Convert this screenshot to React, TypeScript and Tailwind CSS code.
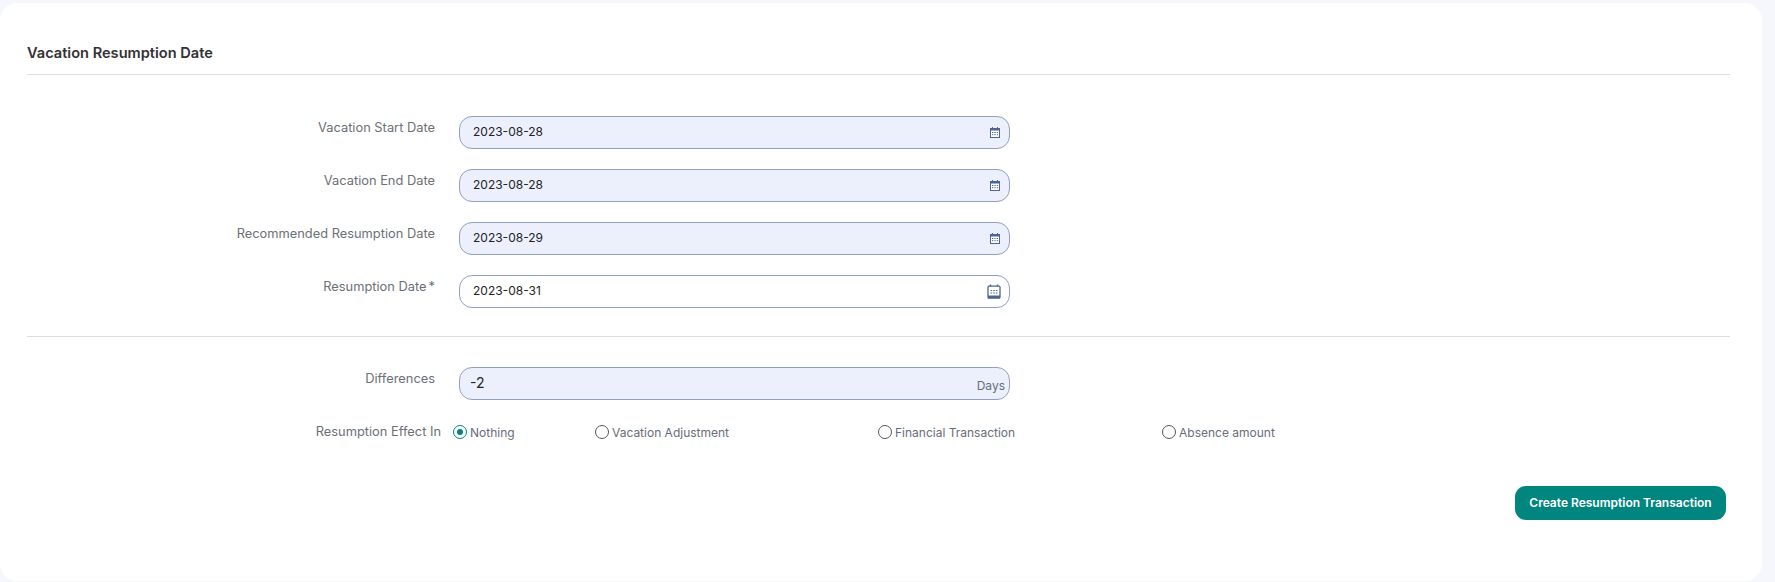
const dateFields = [
  { label: 'Vacation Start Date', value: '2023-08-28', disabled: true },
  { label: 'Vacation End Date', value: '2023-08-28', disabled: true },
  { label: 'Recommended Resumption Date', value: '2023-08-29', disabled: true },
  { label: 'Resumption Date', value: '2023-08-31', disabled: false, required: true },
];

function CalendarIcon({ large }: { large: boolean }) {
  if (large) {
    return (
      <svg width="14" height="15" viewBox="0 0 14 15" className="shrink-0">
        <path d="M3.5 0.5v3M10.5 0.5v3" stroke="#4f6591" strokeWidth="1.4" />
        <rect x="1" y="2.2" width="12" height="12" rx="1" fill="#fff" stroke="#4f6591" strokeWidth="1.3" />
        <rect x="1" y="11.5" width="12" height="2.8" fill="#4f6591" />
        <path d="M3.5 6.5h1.6M6.2 6.5h1.6M8.9 6.5h1.6M3.5 9h1.6M6.2 9h1.6M8.9 9h1.6" stroke="#4f6591" strokeWidth="1.2" />
      </svg>
    );
  }
  return (
    <svg width="10" height="11" viewBox="0 0 10 11" className="shrink-0">
      <path d="M2.5 0v2M7.5 0v2" stroke="#5a6ea0" strokeWidth="1" />
      <rect x="0.5" y="1.5" width="9" height="9" fill="#fff" stroke="#4f6591" />
      <rect x="0" y="1" width="10" height="2.5" fill="#4f6591" />
      <path d="M2 5.5h1.3M4.4 5.5h1.3M6.8 5.5h1.3M2 7.7h1.3M4.4 7.7h1.3M6.8 7.7h1.3" stroke="#4f6591" />
    </svg>
  );
}

function Radio({ label, checked, width }: { label: string; checked?: boolean; width: string }) {
  return (
    <label className={`flex items-center gap-[3px] ${width}`}>
      {checked ? (
        <span className="flex h-[14px] w-[14px] items-center justify-center rounded-full border border-[#00857f]">
          <span className="h-[6px] w-[6px] rounded-full bg-[#00857f]" />
        </span>
      ) : (
        <span className="h-[14px] w-[14px] rounded-full border border-[#555]" />
      )}
      <span className="mt-[2px] text-[12px] text-[#666d78]">{label}</span>
    </label>
  );
}

export default function App() {
  return (
    <div className="h-[582px] bg-[#f6f7fc] pt-[3px] pr-[13px] font-['Inter',sans-serif]">
      <div className="h-[578px] rounded-[18px] bg-white pl-[27px] pr-[32px]">
        <h2 className="flex h-[71px] items-end pb-[13px] text-[14.6px] leading-[16px] font-semibold text-[#333135]">
          Vacation Resumption Date
        </h2>
        <hr className="border-[#dcdde0]" />

        <div className="mt-[41px] flex flex-col gap-[20px]">
          {dateFields.map((field) => (
            <div key={field.label} className="flex items-start">
              <div className="w-[408px] pt-[3px] text-right text-[12.85px] leading-[18px] text-[#6b7077]">
                {field.label}
                {field.required && <span className="ml-[2px]">*</span>}
              </div>
              <div
                className={`ml-[24px] flex h-[33px] w-[551px] items-center justify-between rounded-[13px] border border-[#939fc0] pb-[1px] pl-[13px] text-[12px] text-[#222] ${
                  field.disabled ? 'bg-[#ecf0fc] pr-[9px]' : 'bg-white pr-[8px]'
                }`}
              >
                <span>{field.value}</span>
                <CalendarIcon large={!field.disabled} />
              </div>
            </div>
          ))}
        </div>

        <hr className="mt-[28px] border-[#dcdde0]" />

        <div className="mt-[30px] flex items-start">
          <div className="w-[408px] pt-[3px] text-right text-[12.85px] leading-[18px] text-[#6b7077]">
            Differences
          </div>
          <div className="ml-[24px] flex h-[33px] w-[551px] justify-between rounded-[13px] border border-[#939fc0] bg-[#ecf0fc] pl-[10px] pr-[4px]">
            <span className="pt-[6px] text-[14px] leading-[18px] text-[#222]">-2</span>
            <span className="pt-[9px] text-[12px] leading-[18px] text-[#666d78]">Days</span>
          </div>
        </div>

        <div className="mt-[22px] flex items-center">
          <div className="w-[414px] text-right text-[12.85px] leading-[18px] text-[#6b7077]">
            Resumption Effect In
          </div>
          <div className="ml-[12px] flex items-center">
            <Radio label="Nothing" checked width="w-[142px]" />
            <Radio label="Vacation Adjustment" width="w-[283px]" />
            <Radio label="Financial Transaction" width="w-[284px]" />
            <Radio label="Absence amount" width="w-[200px]" />
          </div>
        </div>

        <div className="mt-[44px] flex justify-end pr-[4px]">
          <button className="h-[34px] w-[211px] rounded-[11px] bg-[#00857f] text-[12px] font-semibold text-white">
            Create Resumption Transaction
          </button>
        </div>
      </div>
    </div>
  );
}
